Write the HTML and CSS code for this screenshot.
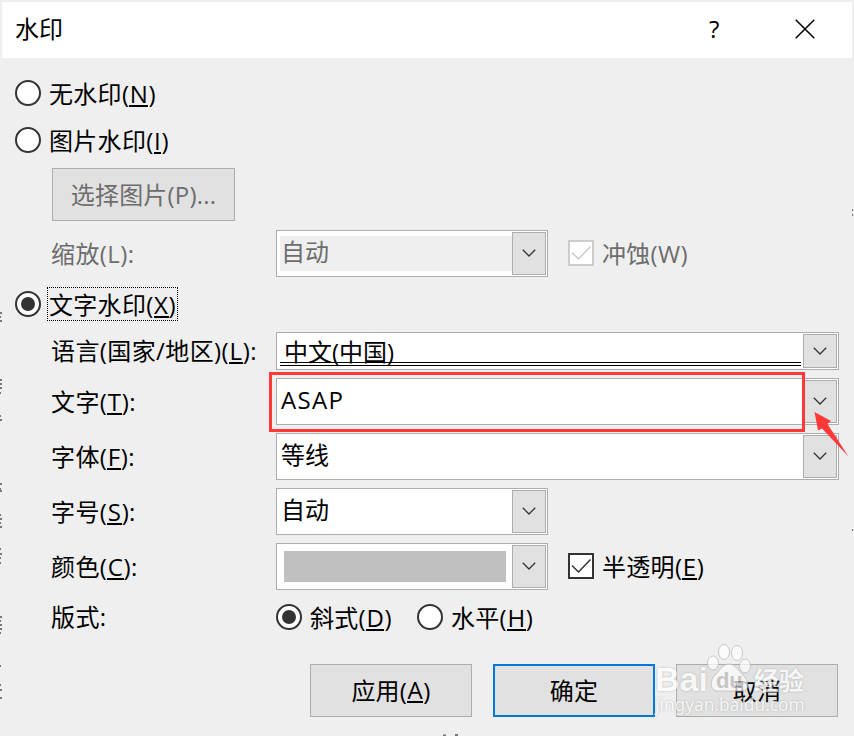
FILE: index.html
```html
<!DOCTYPE html>
<html lang="zh-CN">
<head>
<meta charset="utf-8">
<title>水印</title>
<link rel="stylesheet" href="styles.css">
</head>
<body>
<svg class="defs" width="0" height="0" aria-hidden="true">
  <symbol id="chevron" viewBox="0 0 14 8"><path d="M.8.8 7 7 13.2.8" fill="none" stroke="#333" stroke-width="1.3"/></symbol>
  <symbol id="check" viewBox="0 0 22 22"><path d="M2 10.5 8.5 17 20.5 4.5" fill="none" stroke="currentColor" stroke-width="1.5"/></symbol>
</svg>
<main class="dialog">
  <header class="titlebar">
    <span class="title">水印</span>
    <span class="help">?</span>
    <svg class="close" viewBox="0 0 20 20"><path d="M.7.7 19.3 19.3M19.3.7.7 19.3" stroke="#000" stroke-width="1.5"/></svg>
  </header>
  <form class="form">
    <div class="option first"><i class="radio"></i><span class="text">无水印(<u>N</u>)</span></div>
    <div class="option second"><i class="radio"></i><span class="text">图片水印(<u>I</u>)</span></div>
    <div class="picture"><span class="button disabled">选择图片(P)...</span></div>
    <div class="row scale">
      <span class="label muted">缩放(L):</span>
      <div class="combo short muted"><span class="value shaded">自动</span><span class="drop"><svg><use href="#chevron"/></svg></span></div>
      <div class="checkbox muted"><svg class="box"><use href="#check"/></svg><span class="text">冲蚀(W)</span></div>
    </div>
    <div class="option third"><i class="radio on"></i><span class="text focus">文字水印(<u>X</u>)</span></div>
    <div class="row language">
      <span class="label">语言(国家/地区)(<u>L</u>):</span>
      <div class="combo"><span class="value ruled">中文(中国)</span><span class="drop"><svg><use href="#chevron"/></svg></span></div>
    </div>
    <div class="row">
      <span class="label">文字(<u>T</u>):</span>
      <div class="combo"><span class="value latin">ASAP</span><span class="drop"><svg><use href="#chevron"/></svg></span>
        <span class="highlight"></span>
        <svg class="pointer" viewBox="0 0 36 46"><path d="M.5 0 17 9 13.5 12 34.5 44.5 8 16.5 4 18.5Z" fill="#ff3838"/></svg>
      </div>
    </div>
    <div class="row">
      <span class="label">字体(<u>F</u>):</span>
      <div class="combo"><span class="value">等线</span><span class="drop"><svg><use href="#chevron"/></svg></span></div>
    </div>
    <div class="row">
      <span class="label">字号(<u>S</u>):</span>
      <div class="combo short"><span class="value">自动</span><span class="drop"><svg><use href="#chevron"/></svg></span></div>
    </div>
    <div class="row">
      <span class="label">颜色(<u>C</u>):</span>
      <div class="combo short"><span class="value"><i class="swatch"></i></span><span class="drop"><svg><use href="#chevron"/></svg></span></div>
      <div class="checkbox"><svg class="box"><use href="#check"/></svg><span class="text">半透明(<u>E</u>)</span></div>
    </div>
    <div class="row orientation">
      <span class="label">版式:</span>
      <div class="option slanted"><i class="radio on"></i><span class="text">斜式(<u>D</u>)</span></div>
      <div class="option"><i class="radio"></i><span class="text">水平(<u>H</u>)</span></div>
    </div>
    <div class="actions">
      <span class="button">应用(<u>A</u>)</span>
      <span class="button primary">确定</span>
      <span class="button">取消</span>
    </div>
  </form>
  <svg class="debris" viewBox="0 0 854 736">
    <path d="M0 313h2M0 317h1M0 321h2M0 380h2M0 384h2M0 388h2M0 393h1M0 416h1M0 420h2M0 484h2M0 489h1M0 491h2M0 515h1M0 519h2M0 523h1M0 527h2M0 549h1M0 554h2M0 558h1M0 563h1M0 617h2M0 621h1M0 625h2M0 629h2M0 633h1M0 666h1M0 685h1M0 690h2M0 698h2M852 210h1M852 215h1M852 530h1M443 735.5h3M455 735h3" stroke="#777" stroke-width="2"/>
  </svg>
  <div class="watermark">
    <div class="brand"><span>Bai</span>
      <svg class="paw" viewBox="0 0 46 50"><g fill="#fff" stroke="#bbb" stroke-width="1"><ellipse cx="7" cy="20" rx="5.5" ry="7"/><ellipse cx="18" cy="9" rx="5.5" ry="7.5"/><ellipse cx="31" cy="10" rx="5.5" ry="7.5"/><ellipse cx="39" cy="23" rx="5.5" ry="7"/><path d="M23 21C17 21 14 27 9 32 3 38 4 48 12 48 17 48 29 48 36 48 44 48 43 38 37 32 32 27 29 21 23 21Z"/></g></svg>
      <span class="du">du</span><span class="cn">经验</span></div>
    <div class="site">jingyan.baidu.com</div>
  </div>
</main>
</body>
</html>
```
FILE: styles.css
```css
* { box-sizing: border-box; }
body {
  margin: 0;
  background: #efefef;
  color: #000;
  font: 400 24px/34px "Open Sans", "Noto Sans CJK SC", sans-serif;
}
.defs { position: absolute; }
.dialog { position: relative; width: 854px; height: 736px; overflow: hidden; }
u { text-decoration: none; border-bottom: 2px solid currentColor; display: inline-block; padding: 0 .4px; line-height: 23px; }
.titlebar {
  display: flex;
  align-items: center;
  height: 56px;
  margin: 2px 2px 0;
  padding: 0 0 2px 13px;
  background: #fff;
}
.title { flex: 1; }
.help { width: 12px; margin-right: 74px; font-weight: 500; }
.close { width: 20px; height: 20px; margin-right: 37px; }
.form { display: flex; flex-direction: column; padding-left: 15px; }
.option { display: flex; align-items: center; height: 26px; }
.first { margin-top: 22px; }
.second { margin-top: 21px; }
.third { margin-top: 14px; }
.radio {
  display: flex;
  width: 26px;
  height: 26px;
  margin-right: 8px;
  border: 2px solid #333;
  border-radius: 50%;
  background: #fff;
}
.radio.on::before { content: ""; width: 14px; height: 14px; margin: 4px; border-radius: 50%; background: #333; }
.text { white-space: nowrap; padding-top: 2px; letter-spacing: .3px; }
.checkbox .text { padding-top: 0; }
.focus { width: 131px; margin-left: -2px; padding: 1px 2px 0; height: 34px; outline: 1px dotted #000; outline-offset: -1px; }
.button {
  display: flex;
  align-items: center;
  justify-content: center;
  width: 162px;
  height: 53px;
  border: 1px solid #adadad;
  background: #e1e1e1;
  letter-spacing: .2px;
}
.disabled { width: 183px; color: #6d6d6d; }
.primary { border: 2px solid #0078d7; }
.picture { margin: 15px 0 0 37px; }
.row { display: flex; align-items: center; height: 47px; margin-top: 8px; padding-left: 37px; }
.row.scale { margin-top: 9px; }
.language { height: 38px; margin-top: 15px; }
.label { width: 225px; margin-left: -1px; white-space: nowrap; letter-spacing: .4px; }
.muted { color: #6d6d6d; }
.combo {
  position: relative;
  display: flex;
  width: 563px;
  height: 100%;
  padding: 1px;
  border: 1px solid #abadb3;
  background: #fff;
}
.short { width: 272px; }
.value { flex: 1; padding: 3px 3px; }
.latin { letter-spacing: 1.3px; }
.shaded { margin: 4px 0 4px 2px; padding: 0 1px; background: #efefef; line-height: 32px; }
.ruled { height: 32px; margin: 0 2px 0 2px; padding: 1px 4px; border-bottom: 4px double #000; }
.swatch { display: block; height: 31px; margin: 3px 3px; background: #c0c0c0; }
.drop {
  display: flex;
  align-items: center;
  justify-content: center;
  width: 34px;
  padding: 0 0 1px;
  border: 1px solid #adadad;
  background: #e1e1e1;
}
.drop svg { width: 14px; height: 8px; }
.checkbox { display: flex; align-items: center; margin-left: 20px; }
.box { width: 26px; height: 26px; margin: 0 8px 2px 0; border: 2px solid #333; background: #fff; color: #333; }
.muted .box { border-color: #ccc; color: #ccc; }
.orientation { height: 26px; margin-top: 14px; }
.slanted { width: 141px; }
.actions { display: flex; gap: 21px; margin: 34px 0 0 295px; }
.highlight { position: absolute; left: -8px; top: -7px; width: 536px; height: 60px; border: 3px solid #ff3838; }
.pointer { position: absolute; left: 537px; top: 33px; width: 36px; height: 46px; z-index: 2; }
.debris { position: absolute; inset: 0; width: 854px; height: 736px; pointer-events: none; }
.watermark { position: absolute; left: 655px; top: 643px; width: 160px; height: 75px; color: #fff; opacity: .72; text-shadow: 0 0 2px #999; }
.brand { display: flex; height: 50px; font: 700 34px/72px "Liberation Sans", sans-serif; }
.paw { width: 46px; height: 50px; flex: none; margin-left: -2px; }
.du { margin-left: -36px; color: #bbb; font-size: 22px; line-height: 76px; text-shadow: none; }
.cn { margin-left: 11px; font: 700 25px/72px "Noto Sans CJK SC", sans-serif; }
.site { font: 400 17.3px/24px "Noto Sans", sans-serif; }
```
